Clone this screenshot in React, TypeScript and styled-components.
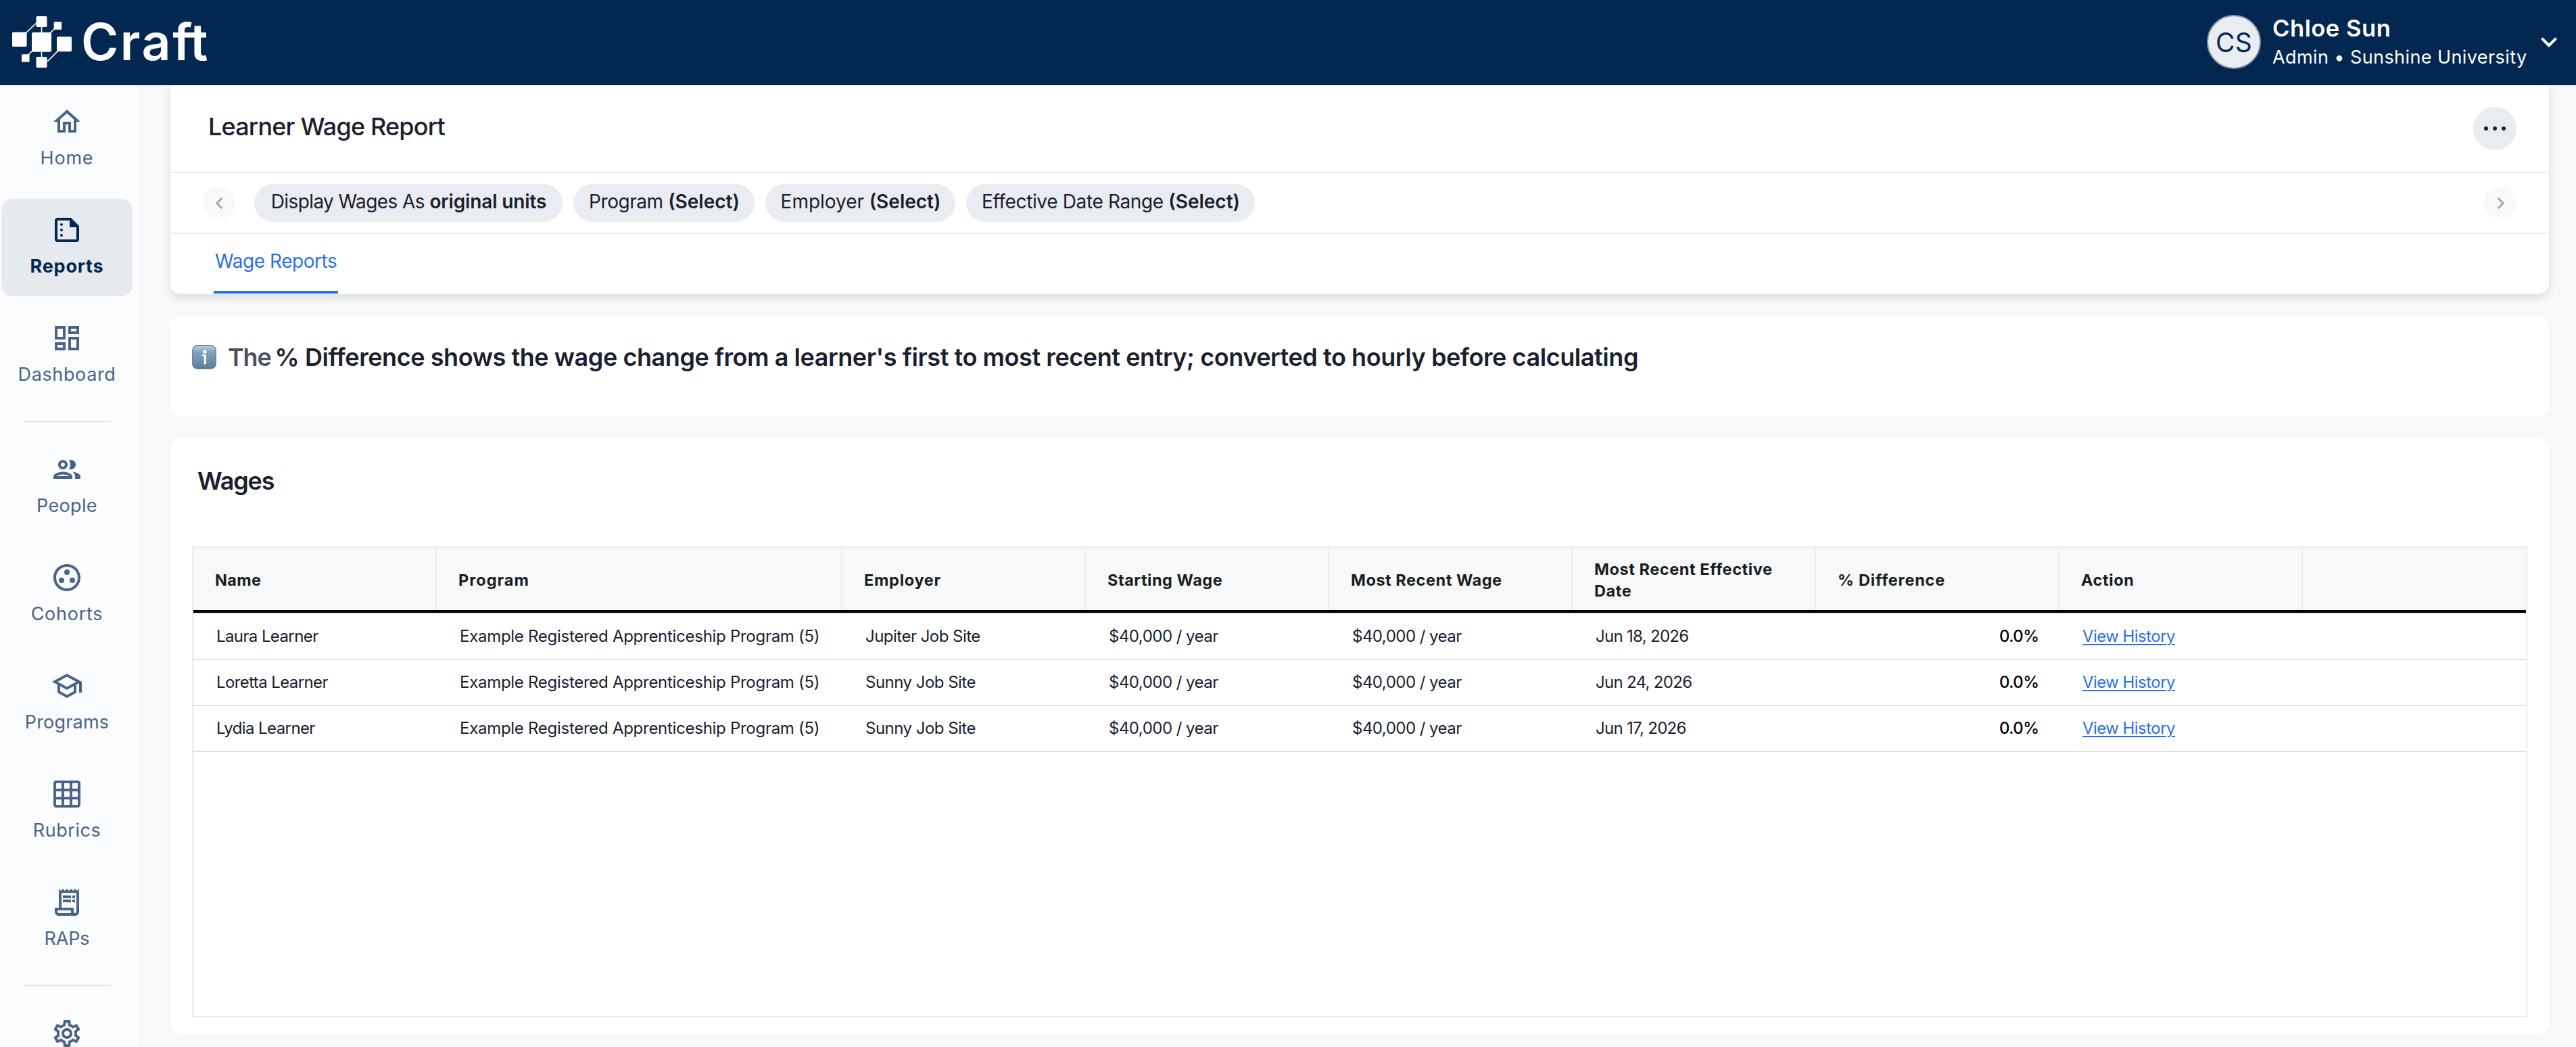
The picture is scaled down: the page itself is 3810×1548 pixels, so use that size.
import React from "react";
import styled, { createGlobalStyle } from "styled-components";
import type { IconType } from "react-icons";
import {
  MdOutlineHome,
  MdOutlineSummarize,
  MdOutlineDashboard,
  MdOutlineGroupWork,
  MdOutlineSchool,
  MdOutlineGridOn,
  MdOutlineReceiptLong,
  MdOutlineSettings,
  MdKeyboardArrowDown,
  MdChevronLeft,
  MdChevronRight,
} from "react-icons/md";

const color = {
  navy: "#022851",
  slate: "#486587",
  ink: "#1b202d",
  blue: "#2a6fee",
  page: "#f7f8fa",
  rail: "#fbfcfe",
  line: "#e9ecf1",
  rowLine: "#dde1ea",
  chip: "#e9ecf1",
};

const GlobalStyle = createGlobalStyle`
  *, *::before, *::after { box-sizing: border-box; }
  body {
    margin: 0;
    overflow: hidden;
    background: ${color.page};
    color: ${color.ink};
    font-family: Inter, "Liberation Sans", sans-serif;
  }
`;

const Text = styled.span<{ $ls?: number }>`
  white-space: nowrap;
  letter-spacing: ${(p) => p.$ls ?? 0}px;
`;

/* ---------- shell ---------- */

const Shell = styled.div`
  display: grid;
  grid-template: 126px 1422px / 204px 1fr;
  width: 3810px;
  height: 1548px;
  overflow: hidden;
`;

const TopBar = styled.header`
  grid-column: 1 / -1;
  display: flex;
  justify-content: space-between;
  align-items: center;
  padding: 0 16px 2px 18px;
  background: ${color.navy};
  color: #fff;
`;

const Brand = styled.div`
  display: flex;
  align-items: center;
`;

const Wordmark = styled.div`
  margin-left: 14px;
  font-size: 75px;
  font-weight: 600;
  line-height: 90px;
`;

const Account = styled.div`
  display: flex;
  align-items: center;
`;

const Avatar = styled.div`
  display: grid;
  place-items: center;
  width: 80px;
  height: 80px;
  border: 2px solid #8494aa;
  border-radius: 50%;
  background: #e9ecf1;
  color: ${color.navy};
  font-size: 39px;
`;

const AccountText = styled.div`
  display: flex;
  flex-direction: column;
  gap: 2px;
  width: 385px;
  margin-left: 17px;
`;

const AccountName = styled(Text)`
  font-size: 34.5px;
  font-weight: 600;
  line-height: 44px;
`;

const AccountRole = styled(Text)`
  font-size: 27px;
  line-height: 38px;
`;

/* ---------- navigation ---------- */

const Rail = styled.nav`
  display: flex;
  flex-direction: column;
  gap: 16px;
  padding: 8px 8px 0 2px;
  background: ${color.rail};
  overflow: hidden;
`;

const RailItem = styled.a<{ $active?: boolean }>`
  display: flex;
  flex: none;
  flex-direction: column;
  align-items: center;
  gap: 13px;
  height: 144px;
  padding-top: 22px;
  border-radius: 16px;
  background: ${(p) => (p.$active ? "#e6e9ee" : "transparent")};
  color: ${(p) => (p.$active ? color.navy : color.slate)};
  font-size: 27px;
  font-weight: ${(p) => (p.$active ? 700 : 400)};
  line-height: 34px;
`;

const RailDivider = styled.hr`
  flex: none;
  width: 130px;
  height: 2px;
  margin: 8px 0 8px 32px;
  border: 0;
  background: #dce2e9;
`;

/* ---------- content ---------- */

const Content = styled.main`
  display: flex;
  flex-direction: column;
  padding: 0 40px 0 48px;
`;

const ReportHeader = styled.section`
  flex: none;
  border-radius: 0 0 16px 16px;
  background: #fff;
  box-shadow: 0 4px 12px rgba(0, 0, 0, 0.13);
`;

const HeaderRow = styled.div`
  display: flex;
  align-items: center;
  height: 90px;
  border-bottom: 2px solid ${color.line};
`;

const TitleRow = styled(HeaderRow)`
  justify-content: space-between;
  height: 130px;
  padding: 0 48px 0 56px;
`;

const Title = styled.h1`
  margin: 0;
  padding-bottom: 6px;
  font-size: 36px;
  font-weight: 500;
  line-height: 44px;
`;

const RoundButton = styled.button<{ $size: number; $faint?: boolean }>`
  display: grid;
  place-items: center;
  flex: none;
  width: ${(p) => p.$size}px;
  height: ${(p) => p.$size}px;
  padding: 0;
  border: 0;
  border-radius: 50%;
  background: ${(p) => (p.$faint ? color.page : color.chip)};
  color: ${(p) => (p.$faint ? "#a8a8a9" : color.ink)};
`;

const FilterRow = styled(HeaderRow)`
  padding: 0 48px;
`;

const Chips = styled.div`
  display: flex;
  flex: 1;
  gap: 16px;
  margin-left: 28px;
`;

const Chip = styled.button<{ $width: number }>`
  display: flex;
  justify-content: center;
  align-items: center;
  gap: 7.5px;
  width: ${(p) => p.$width}px;
  height: 56px;
  padding: 0 0 4px 1px;
  border: 0;
  border-radius: 28px;
  background: ${color.chip};
  color: ${color.ink};
  font-family: inherit;
  font-size: 28px;

  b { font-weight: 600; }
`;

const TabRow = styled(HeaderRow)`
  padding-left: 64px;
  border-bottom-left-radius: 16px;
  border-bottom-right-radius: 16px;
`;

const Tab = styled.a`
  display: flex;
  align-items: center;
  width: 184px;
  height: 88px;
  padding: 0 0 5px 2px;
  border-bottom: 4px solid ${color.blue};
  color: ${color.blue};
  font-size: 28px;
`;

const Card = styled.section`
  flex: none;
  border-radius: 16px;
  background: #fff;
`;

const Notice = styled(Card)`
  display: flex;
  align-items: center;
  height: 150px;
  margin-top: 30px;
  padding: 0 32px 27px;
  font-size: 36px;
  font-weight: 600;
  line-height: 44px;
`;

const NoticeLead = styled(Text)`
  width: 69.6px;
  margin-left: 17px;
  color: #4b505e;
`;

const WagesCard = styled(Card)`
  height: 880px;
  margin-top: 32px;
  padding: 41px 32px 0;
`;

const CardTitle = styled.h2`
  margin: 0 0 75px;
  padding-left: 8px;
  font-size: 36px;
  font-weight: 600;
  line-height: 44px;
`;

const Table = styled.div`
  height: 696px;
  border: 2px solid ${color.line};
`;

const TableRow = styled.div`
  display: grid;
  grid-template-columns: 360px 600px repeat(6, 360px) 1fr;
  height: 68px;
  border-bottom: 2px solid ${color.rowLine};
`;

const TableHead = styled(TableRow)`
  height: 96px;
  border-bottom: 4px solid #000;
  background: ${color.page};
`;

const HeadRule = styled.div`
  height: 2px;
  background: ${color.line};
`;

const HeadCell = styled.div<{ $ls?: number }>`
  display: flex;
  align-items: center;
  padding: 3px 30px 0 32px;
  border-right: 2px solid ${color.line};
  color: #1a1e20;
  font-size: 23.5px;
  font-weight: 700;
  line-height: 32px;
  letter-spacing: ${(p) => p.$ls ?? 0}px;

  &:last-child { border-right: 0; }
`;

const Cell = styled.div<{ $ls?: number; $numeric?: boolean }>`
  display: flex;
  align-items: center;
  justify-content: ${(p) => (p.$numeric ? "flex-end" : "flex-start")};
  padding: 0 ${(p) => (p.$numeric ? 30.5 : 0)}px 0 34px;
  color: ${(p) => (p.$numeric ? "#000" : color.ink)};
  font-size: 24px;
  font-weight: ${(p) => (p.$numeric ? 500 : 400)};
  line-height: 32px;
  letter-spacing: ${(p) => p.$ls ?? 0}px;
  white-space: nowrap;
`;

const CellLink = styled.a`
  color: ${color.blue};
  text-decoration: underline;
  text-decoration-thickness: 2px;
  text-underline-offset: 3px;
  text-decoration-skip-ink: auto;
`;

/* ---------- drawings ---------- */

const LogoMark = () => (
  <svg width="88" height="80" viewBox="18 22 88 80" fill="#fff">
    <path
      d="M38 49L56 32M61.5 38V50M74 49L82 41M49 74L41 82M61.5 74V86M70 91L88 73"
      stroke="#fff"
      strokeWidth="1.7"
      fill="none"
    />
    <rect x="53.5" y="24" width="16" height="16" rx="1.8" />
    <rect x="79.7" y="32.3" width="11.4" height="11.4" rx="1.2" />
    <rect x="18" y="47.5" width="21.6" height="21.6" rx="2" />
    <rect x="47" y="47.7" width="29" height="29" rx="2.6" />
    <rect x="84" y="54.2" width="22" height="22" rx="2" />
    <rect x="32" y="80.2" width="11.6" height="11.6" rx="1.2" />
    <rect x="53.5" y="84" width="16" height="16" rx="1.8" />
  </svg>
);

const PeopleIcon = ({ size = 48 }: { size?: number | string }) => (
  <svg width={size} height={size} viewBox="0 0 24 24" fill="currentColor">
    <path d="M9 13.75c-2.34 0-7 1.17-7 3.5V19h14v-1.75c0-2.33-4.66-3.5-7-3.5zM4.34 17c.84-.58 2.87-1.25 4.66-1.25s3.82.67 4.66 1.25H4.34zM9 12c1.93 0 3.5-1.57 3.5-3.5S10.93 5 9 5 5.5 6.57 5.5 8.5 7.07 12 9 12zm0-5c.83 0 1.5.67 1.5 1.5S9.83 10 9 10s-1.5-.67-1.5-1.5S8.17 7 9 7zm7.04 6.81c1.16.84 1.96 1.96 1.96 3.44V19h4v-1.75c0-2.02-3.5-3.17-5.96-3.44zM15 12c1.93 0 3.5-1.57 3.5-3.5S16.93 5 15 5c-.54 0-1.04.13-1.5.35.63.89 1 1.98 1 3.15s-.37 2.26-1 3.15c.46.22.96.35 1.5.35z" />
  </svg>
);

const InfoGlyph = () => (
  <svg width="36" height="36" viewBox="0 0 36 36">
    <defs>
      <linearGradient id="tile" x1="0" y1="0" x2="0" y2="1">
        <stop offset="0" stopColor="#c3d3e2" />
        <stop offset="0.14" stopColor="#a3bad1" />
        <stop offset="0.3" stopColor="#7f9fc0" />
        <stop offset="0.7" stopColor="#6f8dab" />
        <stop offset="1" stopColor="#61788f" />
      </linearGradient>
    </defs>
    <rect x="0.8" y="0.8" width="34.4" height="34.4" rx="7.2" fill="url(#tile)" stroke="#6a829b" strokeWidth="1.5" />
    <circle cx="18.8" cy="10.3" r="2.7" fill="#fff" />
    <path d="M14.4 14.4H20.8V28.6H17.7V16.3H14.4Z" fill="#fff" />
  </svg>
);

const Dots = () => (
  <svg width="34" height="8" viewBox="0 0 34 8" fill="currentColor">
    <circle cx="4" cy="4" r="3" />
    <circle cx="17" cy="4" r="3" />
    <circle cx="30" cy="4" r="3" />
  </svg>
);

/* ---------- data ---------- */

type NavEntry = {
  label: string;
  icon: IconType | typeof PeopleIcon;
  ls: number;
  active?: boolean;
} | null;

const nav: NavEntry[] = [
  { label: "Home", icon: MdOutlineHome, ls: 0.8 },
  { label: "Reports", icon: MdOutlineSummarize, ls: 0.79, active: true },
  { label: "Dashboard", icon: MdOutlineDashboard, ls: 0.62 },
  null,
  { label: "People", icon: PeopleIcon, ls: 0.32 },
  { label: "Cohorts", icon: MdOutlineGroupWork, ls: 0.75 },
  { label: "Programs", icon: MdOutlineSchool, ls: 0.19 },
  { label: "Rubrics", icon: MdOutlineGridOn, ls: 0.55 },
  { label: "RAPs", icon: MdOutlineReceiptLong, ls: -0.18 },
  null,
];

const filters = [
  { label: "Display Wages As", ls: -0.6, value: "original units", vls: -0.14, width: 456 },
  { label: "Program", ls: -0.45, value: "(Select)", vls: 0, width: 268 },
  { label: "Employer", ls: 0, value: "(Select)", vls: 0, width: 281 },
  { label: "Effective Date Range", ls: -0.36, value: "(Select)", vls: 0, width: 427 },
];

const columns: [string, number][] = [
  ["Name", 0.33],
  ["Program", 1],
  ["Employer", 0.7],
  ["Starting Wage", 0.53],
  ["Most Recent Wage", 0.54],
  ["Most Recent Effective Date", 0.58],
  ["% Difference", 0.8],
  ["Action", 0.6],
  ["", 0],
];

const learners = [
  { name: "Laura Learner", employer: "Jupiter Job Site", date: "Jun 18, 2026" },
  { name: "Loretta Learner", employer: "Sunny Job Site", date: "Jun 24, 2026" },
  { name: "Lydia Learner", employer: "Sunny Job Site", date: "Jun 17, 2026" },
];

export default function App() {
  return (
    <>
      <GlobalStyle />
      <Shell>
        <TopBar>
          <Brand>
            <LogoMark />
            <Wordmark>
              <Text $ls={2.6}>Cra</Text>
              <Text $ls={-0.5}>ft</Text>
            </Wordmark>
          </Brand>
          <Account>
            <Avatar>
              <Text $ls={0.3}>CS</Text>
            </Avatar>
            <AccountText>
              <AccountName $ls={0.55}>Chloe Sun</AccountName>
              <AccountRole $ls={0.41}>Admin • Sunshine University</AccountRole>
            </AccountText>
            <MdKeyboardArrowDown size={48} />
          </Account>
        </TopBar>

        <Rail>
          {nav.map((entry, i) =>
            entry ? (
              <RailItem key={entry.label} $active={entry.active}>
                <entry.icon size={48} />
                <Text $ls={entry.ls}>{entry.label}</Text>
              </RailItem>
            ) : (
              <RailDivider key={i} />
            )
          )}
          <RailItem aria-label="Settings">
            <MdOutlineSettings size={48} />
          </RailItem>
        </Rail>

        <Content>
          <ReportHeader>
            <TitleRow>
              <Title>
                <Text $ls={-0.82}>Learner Wage Report</Text>
              </Title>
              <RoundButton $size={64} aria-label="More options">
                <Dots />
              </RoundButton>
            </TitleRow>
            <FilterRow>
              <RoundButton $size={48} $faint aria-label="Previous filters">
                <MdChevronLeft size={35} />
              </RoundButton>
              <Chips>
                {filters.map((f) => (
                  <Chip key={f.label} $width={f.width}>
                    <Text $ls={f.ls}>{f.label}</Text>
                    <Text as="b" $ls={f.vls}>{f.value}</Text>
                  </Chip>
                ))}
              </Chips>
              <RoundButton $size={48} $faint aria-label="Next filters">
                <MdChevronRight size={35} />
              </RoundButton>
            </FilterRow>
            <TabRow>
              <Tab>
                <Text $ls={-0.45}>Wage Reports</Text>
              </Tab>
            </TabRow>
          </ReportHeader>

          <Notice>
            <InfoGlyph />
            <NoticeLead $ls={-1.2}>The</NoticeLead>
            <Text $ls={-0.43}>
              % Difference shows the wage change from a learner's first to most recent entry; converted to hourly before calculating
            </Text>
          </Notice>

          <WagesCard>
            <CardTitle>
              <Text $ls={-1.1}>Wages</Text>
            </CardTitle>
            <Table>
              <TableHead>
                {columns.map(([label, ls]) => (
                  <HeadCell key={label} $ls={ls}>{label}</HeadCell>
                ))}
              </TableHead>
              <HeadRule />
              {learners.map((l) => (
                <TableRow key={l.name}>
                  <Cell $ls={-0.6}>{l.name}</Cell>
                  <Cell $ls={-0.28}>Example Registered Apprenticeship Program (5)</Cell>
                  <Cell $ls={-0.52}>{l.employer}</Cell>
                  <Cell $ls={-0.52}>$40,000 / year</Cell>
                  <Cell $ls={-0.52}>$40,000 / year</Cell>
                  <Cell $ls={-0.7}>{l.date}</Cell>
                  <Cell $ls={-0.6} $numeric>0.0%</Cell>
                  <Cell $ls={-0.55}>
                    <CellLink>View History</CellLink>
                  </Cell>
                </TableRow>
              ))}
            </Table>
          </WagesCard>
        </Content>
      </Shell>
    </>
  );
}
